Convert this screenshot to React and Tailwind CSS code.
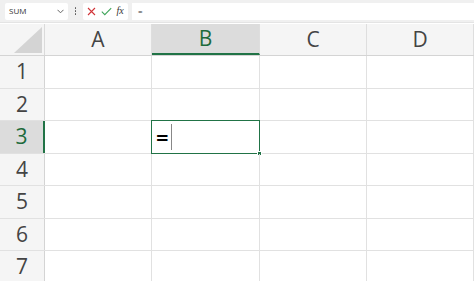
import React from "react";

const cols = [
  { label: "A", w: "w-[107px]" },
  { label: "B", w: "w-[108px]", sel: true },
  { label: "C", w: "w-[107px]" },
  { label: "D", w: "w-[107px]" },
];

const rows = [
  { n: 1, h: "h-[33px]" },
  { n: 2, h: "h-[32px]" },
  { n: 3, h: "h-[33px]", sel: true },
  { n: 4, h: "h-[32px]" },
  { n: 5, h: "h-[33px]" },
  { n: 6, h: "h-[32px]" },
  { n: 7, h: "h-[33px]" },
];

export default function App() {
  return (
    <div className="w-[474px] h-[281px] overflow-hidden bg-white font-['Open_Sans','Liberation_Sans',sans-serif] text-[#444]">
      {/* formula bar */}
      <div className="h-[23px] bg-[#f0f0f0] flex items-center pl-[5px] border-b border-[#e4e4e4]">
        <div className="w-[63px] h-[17px] bg-white rounded-[2px] flex items-center justify-between pl-[4px] pr-[4px]">
          <span className="text-[8px] text-[#333] leading-none">SUM</span>
          <svg width="7" height="5" viewBox="0 0 7 5">
            <path d="M0.5 0.8 L3.5 3.8 L6.5 0.8" fill="none" stroke="#666" strokeWidth="1" />
          </svg>
        </div>
        <div className="w-[15px] flex flex-col items-center gap-[1.5px]">
          <span className="w-[1.5px] h-[1.5px] bg-[#555] rounded-full"></span>
          <span className="w-[1.5px] h-[1.5px] bg-[#555] rounded-full"></span>
          <span className="w-[1.5px] h-[1.5px] bg-[#555] rounded-full"></span>
        </div>
        <div className="w-[45px] h-[17px] bg-white rounded-[2px] flex items-center justify-around px-[2px]">
          <svg width="9" height="9" viewBox="0 0 9 9">
            <path d="M1 1 L8 8 M8 1 L1 8" stroke="#d13438" strokeWidth="1.1" />
          </svg>
          <svg width="11" height="9" viewBox="0 0 11 9">
            <path d="M0.8 4.6 L3.8 7.6 L10.2 1.2" fill="none" stroke="#3fa55a" strokeWidth="1.1" />
          </svg>
          <span className="text-[10px] italic font-['Liberation_Serif',serif] text-[#333] leading-none">fx</span>
        </div>
        <div className="ml-[4px] flex-1 h-[17px] bg-white flex items-center pl-[6px]">
          <span className="text-[8px] text-[#333] leading-none">=</span>
        </div>
      </div>

      {/* column headers */}
      <div className="flex h-[32px] bg-[#f5f5f5] border-b border-[#d4d4d4] mt-[1px]">
        <div className="w-[45px] relative border-r border-[#dadada]">
          <svg className="absolute right-[2px] bottom-[2px]" width="28" height="26" viewBox="0 0 28 26">
            <path d="M28 0 L28 26 L0 26 Z" fill="#d4d4d4" />
          </svg>
        </div>
        {cols.map((c) => (
          <div
            key={c.label}
            className={`${c.w} shrink-0 flex items-center justify-center text-[21px] border-r border-[#dedede] ${
              c.sel ? "bg-[#dcdcdc] text-[#1e6b3c] border-b-2 border-b-[#217346]" : "text-[#444]"
            }`}
          >
            {c.label}
          </div>
        ))}
      </div>

      {/* grid */}
      {rows.map((r) => (
        <div key={r.n} className={`flex ${r.h} border-b border-[#e1e1e1]`}>
          <div
            className={`w-[45px] shrink-0 flex items-center justify-center text-[21px] ${
              r.sel
                ? "bg-[#dcdcdc] text-[#1e6b3c] border-r-2 border-r-[#217346]"
                : "bg-[#f5f5f5] border-r border-[#d4d4d4]"
            }`}
          >
            {r.n}
          </div>
          {cols.map((c) => (
            <div key={c.label} className={`${c.w} shrink-0 border-r border-[#e1e1e1] relative`}>
              {r.sel && c.sel && (
                <div className="absolute -top-[1px] -left-[1px] -right-[1px] -bottom-[1px] border border-[#217346] flex items-center pl-[4px]">
                  <span className="text-[22px] font-semibold text-black leading-none">=</span>
                  <span className="w-[1px] h-[26px] bg-[#888] ml-[2px]"></span>
                  <span className="absolute -right-[3px] -bottom-[3px] w-[5px] h-[5px] bg-[#217346] border border-white"></span>
                </div>
              )}
            </div>
          ))}
        </div>
      ))}
    </div>
  );
}
